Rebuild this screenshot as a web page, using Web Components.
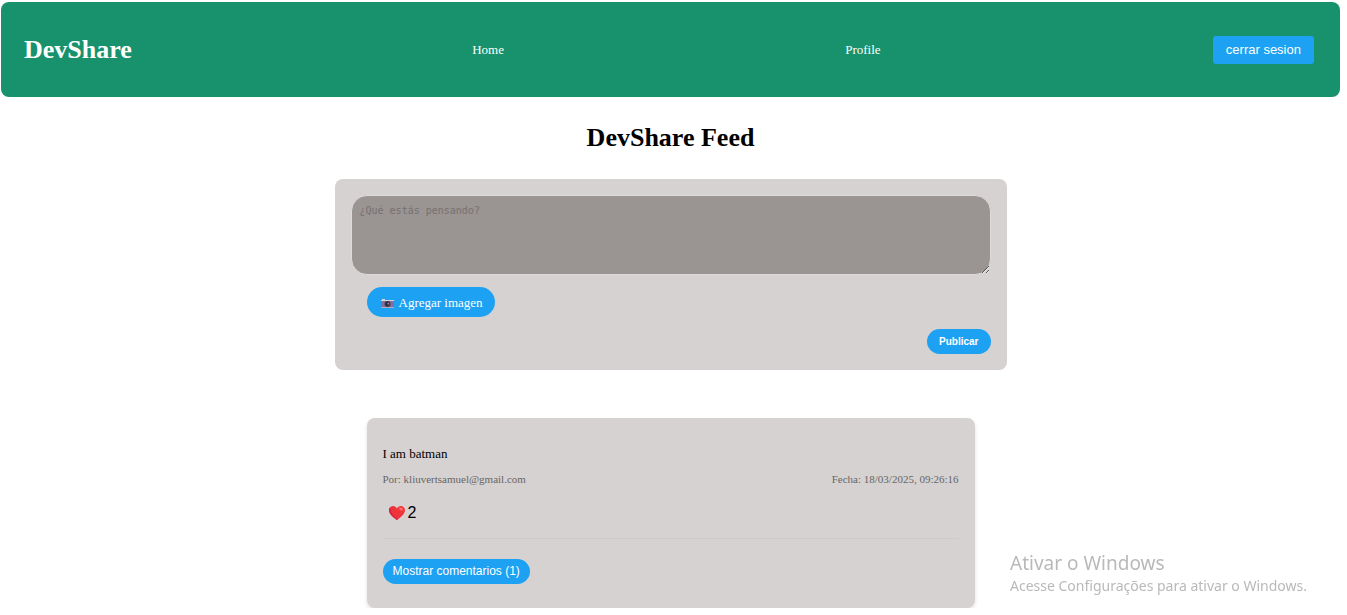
<!DOCTYPE html>
<html lang="es">
<head>
<meta charset="utf-8">
<meta name="viewport" content="width=device-width, initial-scale=1">
<title>DevShare</title>
<style>
  body {
    margin: 0;
    padding: 2px 7px 0 1px;
    background: #fff;
    color: #000;
    font: 13px/16px "Liberation Serif", serif;
    --blue: #1da1f2;
    --panel: #d6d2d1;
  }
</style>
</head>
<body>
<dev-header></dev-header>
<dev-feed>
  <dev-composer></dev-composer>
  <dev-post author="kliuvertsamuel@gmail.com" date="18/03/2025, 09:26:16" likes="2" comments="1">I am batman</dev-post>
</dev-feed>
<activation-note>
  <span slot="title">Ativar o Windows</span>
  Acesse Configurações para ativar o Windows.
</activation-note>

<script>
  class Base extends HTMLElement {
    render(html) {
      this.attachShadow({ mode: "open" }).innerHTML =
        `<style>*{box-sizing:border-box} button{border:0;margin:0;cursor:pointer}</style>` + html;
    }
  }

  customElements.define("dev-header", class extends Base {
    connectedCallback() {
      this.render(`
        <style>
          :host { display: block; }
          nav { display: flex; align-items: center; justify-content: space-between;
                padding: 33px 26px 33px 14px; border-radius: 8px; background: #18926c; color: #fff; }
          h1 { margin: 0; padding: 0 8px 0 9px; font-size: 26px; line-height: 29px; }
          a { padding: 0 9px; color: inherit; text-decoration: none; }
          button { height: 28px; padding: 0 13px; border-radius: 3px; background: var(--blue);
                   color: #fff; font: 13px/28px "Liberation Sans", sans-serif; white-space: nowrap; }
        </style>
        <nav>
          <h1>DevShare</h1>
          <a href="#home">Home</a>
          <a href="#profile">Profile</a>
          <button type="button">cerrar sesion</button>
        </nav>`);
    }
  });

  customElements.define("dev-feed", class extends Base {
    connectedCallback() {
      this.render(`
        <style>
          :host { display: block; max-width: 672px; margin: 0 auto; }
          h2 { margin: 26px 0; text-align: center; font-size: 26px; line-height: 30px; }
        </style>
        <h2>DevShare Feed</h2>
        <slot></slot>`);
    }
  });

  customElements.define("dev-composer", class extends Base {
    connectedCallback() {
      this.render(`
        <style>
          :host { display: block; }
          form { display: flex; flex-direction: column; gap: 12px; padding: 16px;
                 border-radius: 8px; background: var(--panel); }
          textarea { display: block; width: 100%; height: 80px; margin: 0; padding: 8px;
                     border: 1px solid #dedbda; border-radius: 16px; background: #9a9493;
                     font: 10px/13px "DejaVu Sans Mono", monospace; resize: vertical; }
          textarea::placeholder { color: #757171; }
          .attach { align-self: flex-start; display: flex; align-items: center; gap: 5px;
                    height: 30px; margin-left: 16px; padding: 2px 12px 0 14px; border-radius: 15px;
                    background: var(--blue); color: #fff; font: 13px/16px "Liberation Serif", serif; }
          .attach svg { display: block; width: 13px; height: 9px; }
          .publish { align-self: flex-end; height: 25px; padding: 0 12px; border-radius: 13px;
                     background: var(--blue); color: #fff; font: bold 10px/25px "Liberation Sans", sans-serif; }
        </style>
        <form>
          <textarea aria-label="Publicación" placeholder="¿Qué estás pensando?"></textarea>
          <button class="attach" type="button">
            <svg viewBox="0 0 13 9" aria-hidden="true">
              <path d="M0 1h13v8H0z" fill="#82709f"/>
              <path d="M0 1h1V0h3v1h9v1H0z" fill="#d3d6df"/>
              <path d="M0 8h13v1H0z" fill="#b7a6c4"/>
              <circle cx="6.500" cy="5" r="3" fill="#413b50"/>
              <circle cx="6.500" cy="5" r="1.800" fill="#262632"/>
              <circle cx="7.200" cy="4.700" r=".9" fill="#a68db9"/>
            </svg>Agregar imagen</button>
          <button class="publish" type="button">Publicar</button>
        </form>`);
    }
  });

  customElements.define("dev-post", class extends Base {
    connectedCallback() {
      const get = name => this.getAttribute(name);
      this.render(`
        <style>
          :host { display: block; margin: 48px 32px 0; }
          article { padding: 28px 16px 24px; border-radius: 8px; background: var(--panel);
                    box-shadow: 0 2px 4px rgba(0, 0, 0, .12); }
          p { margin: 0 0 10px; }
          .meta { display: flex; flex-wrap: wrap; justify-content: space-between; gap: 0 16px;
                  color: #666; font-size: 11px; line-height: 14px; }
          .like { display: flex; align-items: center; gap: 3px; height: 20px; margin: 17px 0 0; padding: 0 6px;
                  background: none; color: #000; font: 16px/20px "Liberation Sans", sans-serif; }
          .like svg { display: block; width: 16px; height: 14px; }
          footer { margin-top: 15px; padding-top: 20px; border-top: 1px solid #cdcac9; }
          .comments { display: block; height: 25px; padding: 0 10px; border-radius: 13px;
                      background: var(--blue); color: #fff; font: 12px/25px "Liberation Sans", sans-serif; }
        </style>
        <article>
          <p><slot></slot></p>
          <div class="meta"><span>Por: ${get("author")}</span><span>Fecha: ${get("date")}</span></div>
          <button class="like" type="button" aria-label="Me gusta: ${get("likes")}">
            <svg viewBox="0 0 16 14" aria-hidden="true">
              <path d="M8 14C5.500 12 0 8.500 0 4.200C0 1.800 1.800 0 4.200 0C5.900 0 7.300.900 8 2.400C8.700.900 10.100 0 11.800 0C14.200 0 16 1.800 16 4.200C16 8.500 10.500 12 8 14Z" fill="#f0353a"/>
              <path d="M8 14C5.500 12 0 8.500 0 4.200C0 2.700.500 1.700 1.300 1C1 5.500 3.700 9.700 8.800 13.300Z" fill="#cf2440"/>
              <ellipse cx="12" cy="3" rx="2" ry="1.300" fill="#ff6f6d" transform="rotate(28 12 3)"/>
            </svg>${get("likes")}</button>
          <footer><button class="comments" type="button">Mostrar comentarios (${get("comments")})</button></footer>
        </article>`);
    }
  });

  customElements.define("activation-note", class extends Base {
    connectedCallback() {
      this.render(`
        <style>
          :host { position: fixed; right: 40px; bottom: 19px; color: #b9b9b9; pointer-events: none;
                  font: 14px/20px "Noto Sans", sans-serif; white-space: nowrap; }
          .title { font-size: 19px; line-height: 26px; }
        </style>
        <div class="title"><slot name="title"></slot></div>
        <slot></slot>`);
    }
  });
</script>
</body>
</html>
